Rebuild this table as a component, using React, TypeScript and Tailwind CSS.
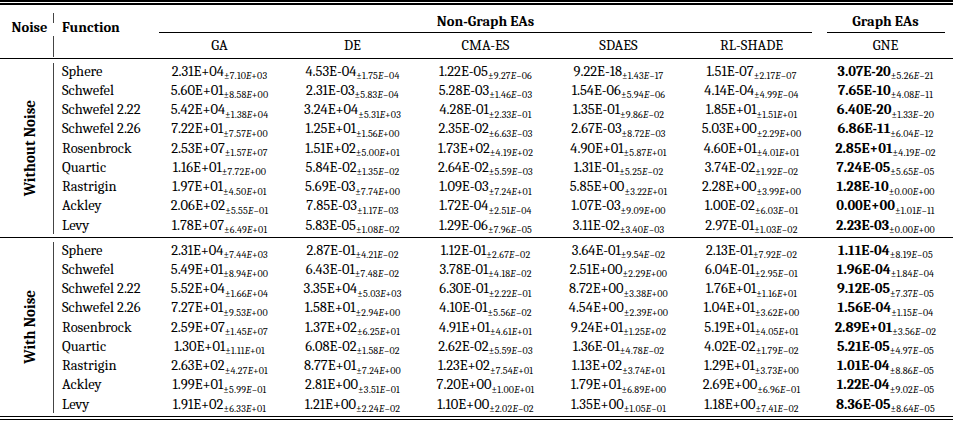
import React from 'react';

const METHODS = ['GA', 'DE', 'CMA-ES', 'SDAES', 'RL-SHADE', 'GNE'];

// each row: function name, then "mean/std" for GA, DE, CMA-ES, SDAES, RL-SHADE, GNE
const WITHOUT_NOISE: [string, string][] = [
  ['Sphere', '2.31E+04/7.10E+03 4.53E-04/1.75E-04 1.22E-05/9.27E-06 9.22E-18/1.43E-17 1.51E-07/2.17E-07 3.07E-20/5.26E-21'],
  ['Schwefel', '5.60E+01/8.58E+00 2.31E-03/5.83E-04 5.28E-03/1.46E-03 1.54E-06/5.94E-06 4.14E-04/4.99E-04 7.65E-10/4.08E-11'],
  ['Schwefel 2.22', '5.42E+04/1.38E+04 3.24E+04/5.31E+03 4.28E-01/2.33E-01 1.35E-01/9.86E-02 1.85E+01/1.51E+01 6.40E-20/1.33E-20'],
  ['Schwefel 2.26', '7.22E+01/7.57E+00 1.25E+01/1.56E+00 2.35E-02/6.63E-03 2.67E-03/8.72E-03 5.03E+00/2.29E+00 6.86E-11/6.04E-12'],
  ['Rosenbrock', '2.53E+07/1.57E+07 1.51E+02/5.00E+01 1.73E+02/4.19E+02 4.90E+01/5.87E+01 4.60E+01/4.01E+01 2.85E+01/4.19E-02'],
  ['Quartic', '1.16E+01/7.72E+00 5.84E-02/1.35E-02 2.64E-02/5.59E-03 1.31E-01/5.25E-02 3.74E-02/1.92E-02 7.24E-05/5.65E-05'],
  ['Rastrigin', '1.97E+01/4.50E+01 5.69E-03/7.74E+00 1.09E-03/7.24E+01 5.85E+00/3.22E+01 2.28E+00/3.99E+00 1.28E-10/0.00E+00'],
  ['Ackley', '2.06E+02/5.55E-01 7.85E-03/1.17E-03 1.72E-04/2.51E-04 1.07E-03/9.09E+00 1.00E-02/6.03E-01 0.00E+00/1.01E-11'],
  ['Levy', '1.78E+07/6.49E+01 5.83E-05/1.08E-02 1.29E-06/7.96E-05 3.11E-02/3.40E-03 2.97E-01/1.03E-02 2.23E-03/0.00E+00'],
];

const WITH_NOISE: [string, string][] = [
  ['Sphere', '2.31E+04/7.44E+03 2.87E-01/4.21E-02 1.12E-01/2.67E-02 3.64E-01/9.54E-02 2.13E-01/7.92E-02 1.11E-04/8.19E-05'],
  ['Schwefel', '5.49E+01/8.94E+00 6.43E-01/7.48E-02 3.78E-01/4.18E-02 2.51E+00/2.29E+00 6.04E-01/2.95E-01 1.96E-04/1.84E-04'],
  ['Schwefel 2.22', '5.52E+04/1.66E+04 3.35E+04/5.03E+03 6.30E-01/2.22E-01 8.72E+00/3.38E+00 1.76E+01/1.16E+01 9.12E-05/7.37E-05'],
  ['Schwefel 2.26', '7.27E+01/9.53E+00 1.58E+01/2.94E+00 4.10E-01/5.56E-02 4.54E+00/2.39E+00 1.04E+01/3.62E+00 1.56E-04/1.15E-04'],
  ['Rosenbrock', '2.59E+07/1.45E+07 1.37E+02/6.25E+01 4.91E+01/4.61E+01 9.24E+01/1.25E+02 5.19E+01/4.05E+01 2.89E+01/3.56E-02'],
  ['Quartic', '1.30E+01/1.11E+01 6.08E-02/1.58E-02 2.62E-02/5.59E-03 1.36E-01/4.78E-02 4.02E-02/1.79E-02 5.21E-05/4.97E-05'],
  ['Rastrigin', '2.63E+02/4.27E+01 8.77E+01/7.24E+00 1.23E+02/7.54E+01 1.13E+02/3.74E+01 1.29E+01/3.73E+00 1.01E-04/8.86E-05'],
  ['Ackley', '1.99E+01/5.99E-01 2.81E+00/3.51E-01 7.20E+00/1.00E+01 1.79E+01/6.89E+00 2.69E+00/6.96E-01 1.22E-04/9.02E-05'],
  ['Levy', '1.91E+02/6.33E+01 1.21E+00/2.24E-02 1.10E+00/2.02E-02 1.35E+00/1.05E-01 1.18E+00/7.41E-02 8.36E-05/8.64E-05'],
];

function Std({ value }: { value: string }) {
  const [mant, exp] = value.split('E');
  const sign = exp[0] === '-' ? '\u2212' : '+';
  return (
    <sub className="text-[10px] tracking-[0.2px] -bottom-[3.5px]">
      ±{mant}
      <span className="italic">E</span>
      {sign}
      {exp.slice(1)}
    </sub>
  );
}

function Block({ label, rows }: { label: string; rows: [string, string][] }) {
  return (
    <div className="flex">
      {/* rotated group label */}
      <div className="w-[53px] flex items-center justify-center pl-[6px]">
        <span className="font-bold text-[15px] leading-[18px] [writing-mode:vertical-rl] rotate-180 whitespace-nowrap">
          {label}
        </span>
      </div>
      <div className="w-px bg-[#444] mt-[4px] mb-[3px]" />
      <div className="pt-[3px] pb-[1.5px]">
        {rows.map(([name, cells]) => (
          <div
            key={name}
            className="grid grid-cols-[99px_133px_133px_133px_133px_133px_135px] h-[19.28px] items-center"
          >
            <div className="pl-[8px] whitespace-nowrap">{name}</div>
            {cells.split(' ').map((c, i) => {
              const [mean, std] = c.split('/');
              return (
                <div key={i} className="text-center whitespace-nowrap">
                  <span className={i === 5 ? 'font-bold' : ''}>{mean}</span>
                  <Std value={std} />
                </div>
              );
            })}
          </div>
        ))}
      </div>
    </div>
  );
}

export default function App() {
  return (
    <div className="w-[953px] h-[421px] bg-white text-black font-serif text-[14.5px] leading-[18px] overflow-hidden">
      {/* top double rule */}
      <div className="h-[1.5px] bg-black" />
      <div className="h-[1.5px]" />
      <div className="h-[1.5px] bg-black" />

      {/* header */}
      <div className="grid grid-cols-[53px_100px_133px_133px_133px_133px_133px_135px] grid-rows-[28px_25px]">
        <div className="row-span-2 pt-[14px] pl-[6px] text-center font-bold">Noise</div>
        <div className="row-span-2 flex">
          <div className="w-px flex flex-col">
            <div className="h-[8px]" />
            <div className="h-[10px] bg-[#444]" />
            <div className="h-[13px]" />
            <div className="flex-1 bg-[#444] mb-[1px]" />
          </div>
          <div className="pl-[8px] pt-[14px] font-bold">Function</div>
        </div>
        <div className="col-span-5 flex flex-col justify-end">
          <div className="text-center font-bold">Non-Graph EAs</div>
          <div className="h-px bg-black mx-[6px] mt-[1px]" />
        </div>
        <div className="flex flex-col justify-end">
          <div className="text-center font-bold">Graph EAs</div>
          <div className="h-px bg-black ml-[9px] mr-[8px] mt-[1px]" />
        </div>
        {METHODS.map((m) => (
          <div key={m} className="pt-[4px] text-center">
            {m}
          </div>
        ))}
      </div>

      <div className="h-[1.5px] bg-black" />
      <Block label="Without Noise" rows={WITHOUT_NOISE} />
      <div className="h-px bg-black" />
      <Block label="With Noise" rows={WITH_NOISE} />

      {/* bottom double rule */}
      <div className="h-[1.5px] bg-black" />
      <div className="h-[1.5px]" />
      <div className="h-[1.5px] bg-black" />
    </div>
  );
}
